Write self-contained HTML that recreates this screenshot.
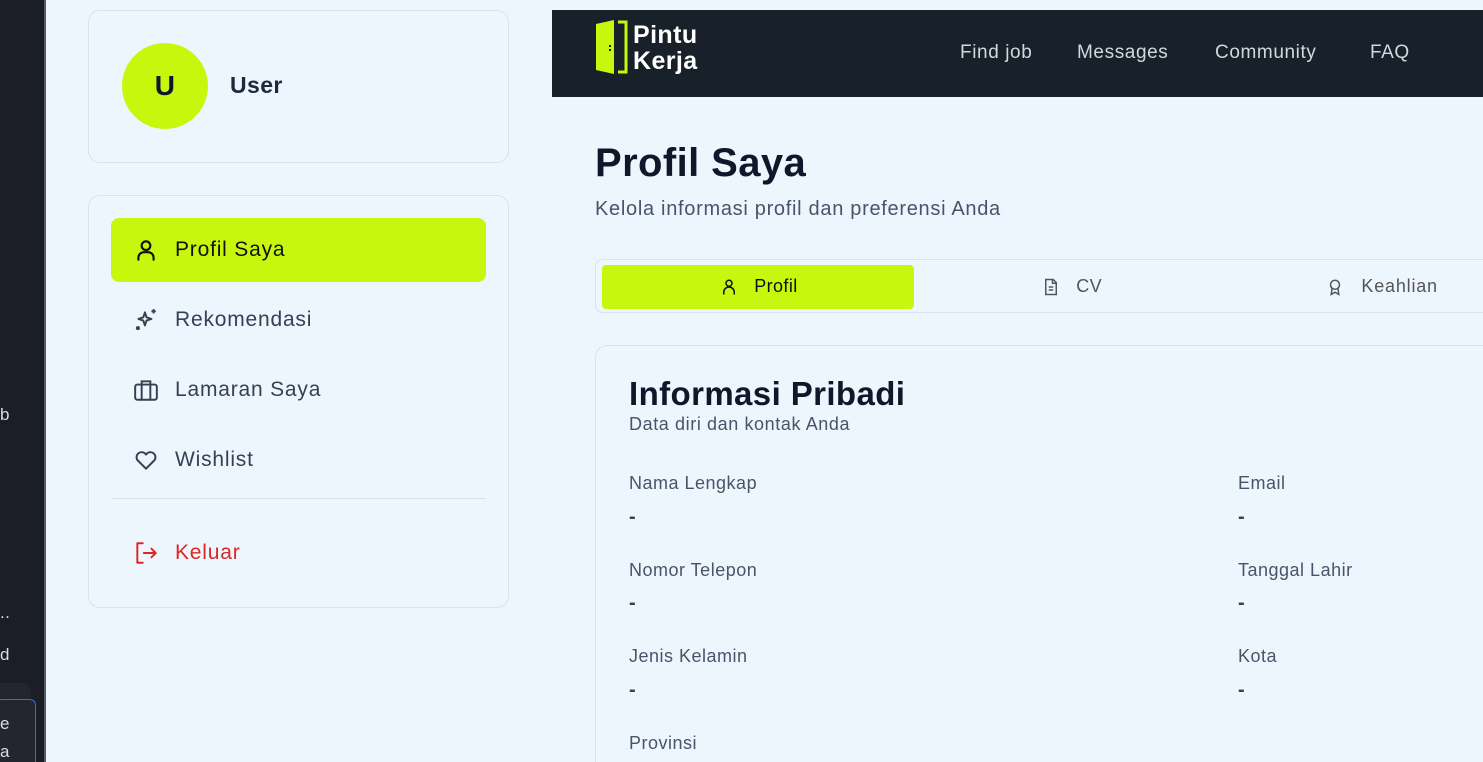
<!DOCTYPE html>
<html><head><meta charset="utf-8"><style>
*{box-sizing:border-box;margin:0;padding:0}
html,body{width:1483px;height:762px;overflow:hidden}
body{background:#eef6fd;font-family:"Liberation Sans",sans-serif;position:relative;color:#0f172a;letter-spacing:0.4px}
.ab{position:absolute}
.strip{left:0;top:0;width:46px;height:762px;background:#1b1e27;border-right:2px solid #555a63}
.card{border:1px solid #d9e2ec;border-radius:12px;background:#eef6fd}
.nav{left:552px;top:10px;width:931px;height:87px;background:#18202a}
.nav a{position:absolute;top:32px;color:#d4d8de;font-size:19px;letter-spacing:0.6px}
.item{position:absolute;left:22px;width:375px;height:64px;border-radius:8px;display:flex;align-items:center;padding-left:22px;font-size:21px;color:#334155;letter-spacing:0.8px}
.item svg{margin-right:16px}
.lbl{position:absolute;font-size:18px;color:#475569;letter-spacing:0.5px}
.val{position:absolute;font-size:20px;color:#334155;font-weight:bold}
</style></head><body>
<div class="ab strip"></div>
<div class="ab" style="left:0;top:405px;color:#ddd;font-size:17px">b</div>
<div class="ab" style="left:0;top:603px;color:#ddd;font-size:17px">..</div>
<div class="ab" style="left:0;top:645px;color:#ddd;font-size:17px">d</div>
<div class="ab" style="left:0;top:683px;width:31px;height:20px;background:#23262f;border-radius:0 8px 0 0"></div>
<div class="ab" style="left:-4px;top:699px;width:40px;height:70px;border:1px solid #2f6fd0;border-radius:6px;background:#23262f"></div>
<div class="ab" style="left:0;top:714px;color:#ddd;font-size:17px">e</div>
<div class="ab" style="left:0;top:742px;color:#ddd;font-size:17px">a</div>

<div class="ab card" style="left:88px;top:10px;width:421px;height:153px"></div>
<div class="ab" style="left:122px;top:43px;width:86px;height:86px;border-radius:50%;background:#c6f70c;display:flex;align-items:center;justify-content:center;font-size:28px;font-weight:bold;color:#0f172a">U</div>
<div class="ab" style="left:230px;top:72px;font-size:23px;font-weight:bold;color:#1e293b">User</div>

<div class="ab card" style="left:88px;top:195px;width:421px;height:413px">
 <div class="item" style="top:22px;background:#c6f70c;color:#111">
  <svg width="26" height="26" viewBox="0 0 24 24" fill="none" stroke="#111" stroke-width="2" stroke-linecap="round"><circle cx="12" cy="8" r="4"/><path d="M5 21v-2a5 5 0 0 1 5-5h4a5 5 0 0 1 5 5v2"/></svg>Profil Saya</div>
 <div class="item" style="top:92px">
  <svg width="26" height="26" viewBox="0 0 24 24" fill="none" stroke="#334155" stroke-width="1.8" stroke-linejoin="round"><path d="M11 5l1.5 4.5L17 11l-4.5 1.5L11 17l-1.5-4.5L5 11l4.5-1.5z"/><path d="M19 2v4M17 4h4"/><circle cx="4.5" cy="19.5" r="1"/></svg>Rekomendasi</div>
 <div class="item" style="top:162px">
  <svg width="26" height="26" viewBox="0 0 24 24" fill="none" stroke="#334155" stroke-width="1.8"><rect x="2" y="7" width="20" height="14" rx="2"/><path d="M8 7V4h8v3M8 7v14M16 7v14"/></svg>Lamaran Saya</div>
 <div class="item" style="top:232px">
  <svg width="26" height="26" viewBox="0 0 24 24" fill="none" stroke="#334155" stroke-width="1.8" stroke-linejoin="round"><path d="M12 20l-8-8a4.5 4.5 0 0 1 8-5 4.5 4.5 0 0 1 8 5z"/></svg>Wishlist</div>
 <div class="ab" style="left:22px;top:302px;width:375px;height:1px;background:#d9e2ec"></div>
 <div class="item" style="top:325px;color:#dc2626">
  <svg width="26" height="26" viewBox="0 0 24 24" fill="none" stroke="#dc2626" stroke-width="1.8" stroke-linecap="round" stroke-linejoin="round"><path d="M9 3H4v18h5M10 12h11M17 8l4 4-4 4"/></svg>Keluar</div>
</div>

<div class="ab nav">
 <svg class="ab" style="left:42px;top:8px" width="36" height="58" viewBox="0 0 36 58"><path d="M2 6L20 2v54L2 52z" fill="#c6f70c"/><path d="M24 4h8v50h-8" fill="none" stroke="#c6f70c" stroke-width="3"/><rect x="15" y="27" width="2" height="2" fill="#18202a"/><rect x="15" y="31" width="2" height="2" fill="#18202a"/></svg>
 <div class="ab" style="left:81px;top:12px;color:#fff;font-size:25px;font-weight:bold;line-height:26px">Pintu<br>Kerja</div>
 <a style="left:408px">Find job</a><a style="left:525px">Messages</a><a style="left:663px">Community</a><a style="left:818px">FAQ</a>
</div>

<div class="ab" style="left:595px;top:141px;font-size:40px;font-weight:bold;color:#0f172a">Profil Saya</div>
<div class="ab" style="left:595px;top:198px;font-size:20px;color:#475569;letter-spacing:0.7px">Kelola informasi profil dan preferensi Anda</div>

<div class="ab card" style="left:595px;top:259px;width:900px;height:54px;border-radius:8px"></div>
<div class="ab" style="left:602px;top:265px;width:312px;height:44px;background:#c6f70c;border-radius:4px"></div>
<div class="ab" style="left:720px;top:276px;font-size:18px;color:#111;display:flex;align-items:center"><svg width="18" height="20" viewBox="0 0 24 24" fill="none" stroke="#111" stroke-width="2"><circle cx="12" cy="7" r="4"/><path d="M5 22v-3a5 5 0 0 1 14 0v3"/></svg>&nbsp;&nbsp;&nbsp;Profil</div>
<div class="ab" style="left:1042px;top:276px;font-size:18px;color:#555;display:flex;align-items:center"><svg width="18" height="20" viewBox="0 0 24 24" fill="none" stroke="#555" stroke-width="2"><path d="M5 2h10l4 4v16H5zM14 2v5h5M9 12h6M9 16h6"/></svg>&nbsp;&nbsp;&nbsp;CV</div>
<div class="ab" style="left:1326px;top:276px;font-size:18px;color:#555;display:flex;align-items:center;letter-spacing:0.8px"><svg width="18" height="20" viewBox="0 0 24 24" fill="none" stroke="#555" stroke-width="2"><circle cx="12" cy="9" r="6"/><path d="M8 14l-1 8 5-3 5 3-1-8"/></svg>&nbsp;&nbsp;&nbsp;Keahlian</div>

<div class="ab card" style="left:595px;top:345px;width:900px;height:440px"></div>
<div class="ab" style="left:629px;top:375px;font-size:33px;font-weight:bold;color:#0f172a">Informasi Pribadi</div>
<div class="ab" style="left:629px;top:414px;font-size:18px;color:#475569;letter-spacing:0.6px">Data diri dan kontak Anda</div>

<div class="lbl" style="left:629px;top:473px">Nama Lengkap</div><div class="val" style="left:629px;top:506px">-</div>
<div class="lbl" style="left:1238px;top:473px">Email</div><div class="val" style="left:1238px;top:506px">-</div>
<div class="lbl" style="left:629px;top:560px">Nomor Telepon</div><div class="val" style="left:629px;top:592px">-</div>
<div class="lbl" style="left:1238px;top:560px">Tanggal Lahir</div><div class="val" style="left:1238px;top:592px">-</div>
<div class="lbl" style="left:629px;top:646px">Jenis Kelamin</div><div class="val" style="left:629px;top:679px">-</div>
<div class="lbl" style="left:1238px;top:646px">Kota</div><div class="val" style="left:1238px;top:679px">-</div>
<div class="lbl" style="left:629px;top:733px">Provinsi</div>
</body></html>
